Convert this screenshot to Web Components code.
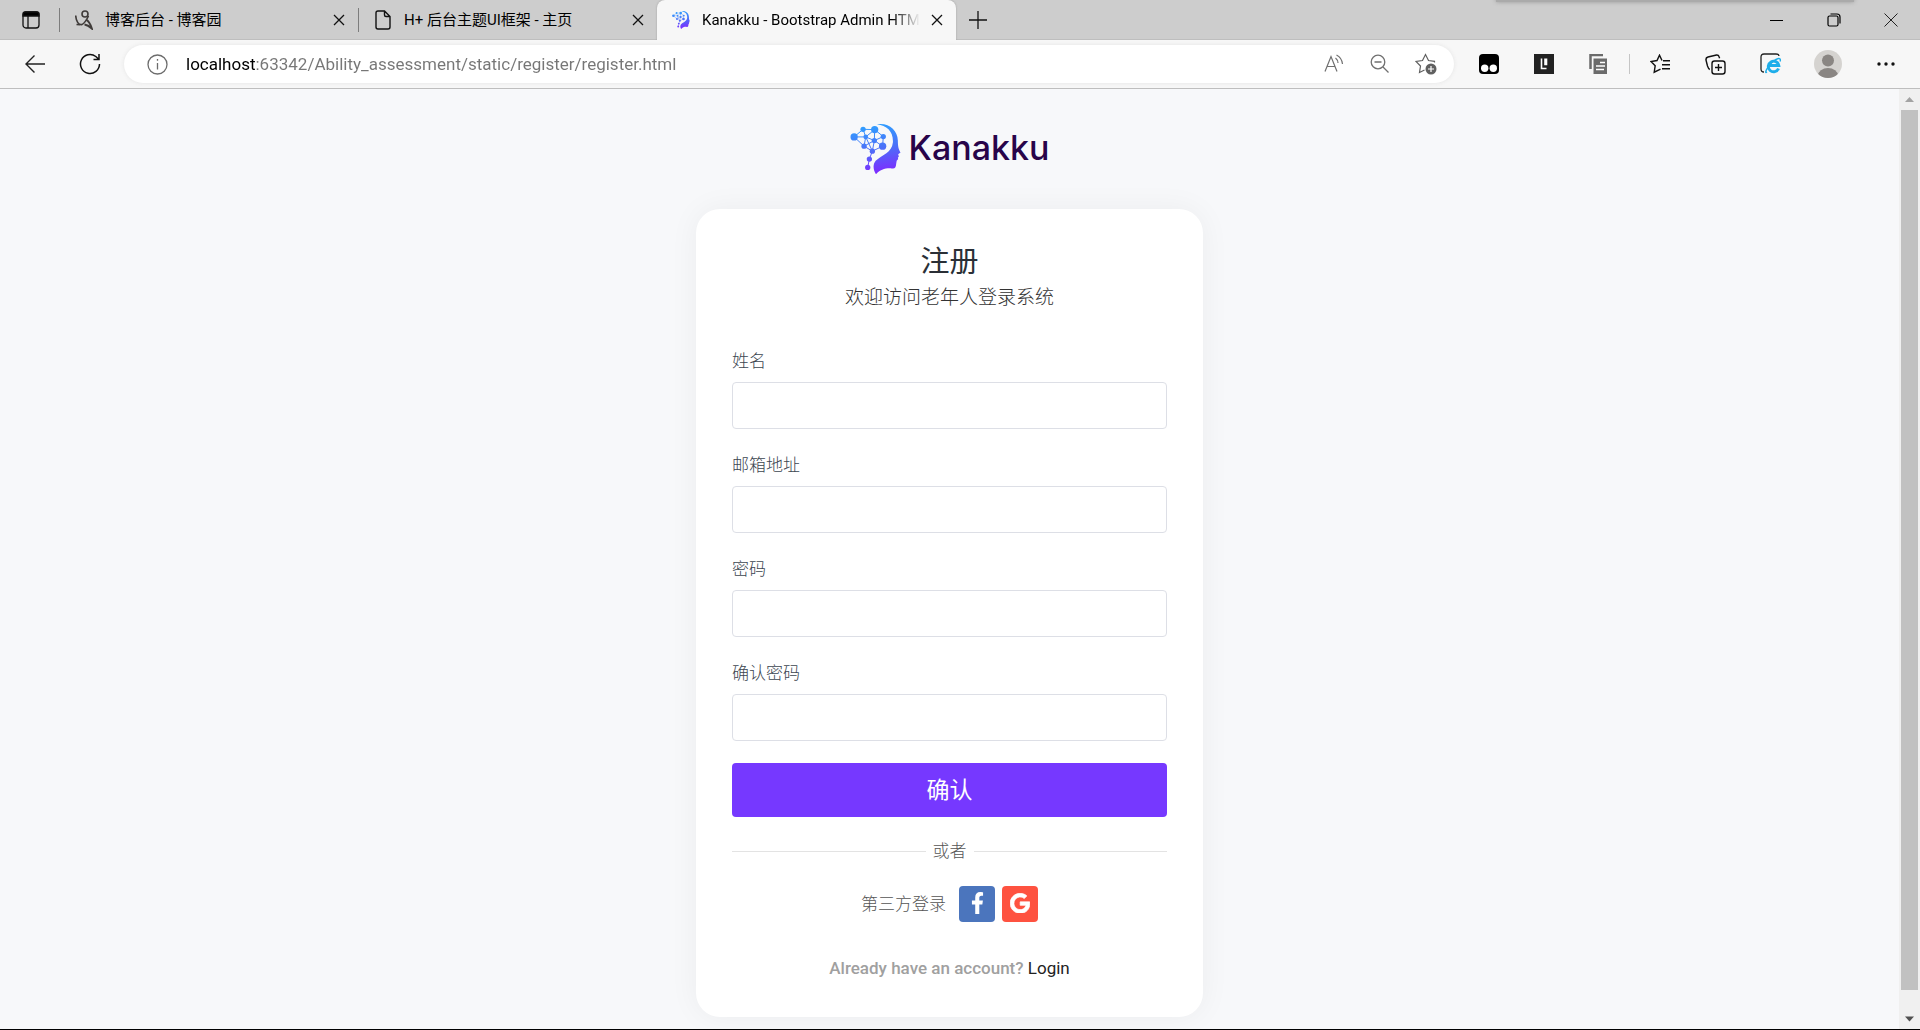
<!DOCTYPE html>
<html lang="zh-CN">
<head>
<meta charset="utf-8">
<title>Kanakku - Bootstrap Admin HTML Template</title>
<style>
html, body { margin: 0; height: 100%; }
body { font-family: "Open Sans", "Noto Sans CJK SC", sans-serif; overflow: hidden; background: #f7f8fa; }
</style>
</head>
<body>
<app-shell></app-shell>
<script>
const base = `<style>
:host, *, *::before, *::after { box-sizing: border-box; }
button { font: inherit; color: inherit; border: 0; background: none; padding: 0; margin: 0; cursor: pointer; }
a { color: inherit; text-decoration: none; }
svg { display: block; }
</style>`;
function define(name, html, setup) {
  const template = document.createElement('template');
  template.innerHTML = base + html;
  customElements.define(name, class extends HTMLElement {
    constructor() {
      super();
      this.attachShadow({ mode: 'open' }).append(template.content.cloneNode(true));
    }
    connectedCallback() { if (setup) setup(this, this.shadowRoot); }
  });
}

// Head made of a network of nodes, used for the logo and the tab icon
define('brain-mark', `<style>
:host { display: block; flex: none; width: 51px; height: 52px; }
svg { width: 100%; height: 100%; }
</style>
<svg viewBox="89 69 153 157" aria-hidden="true">
<defs><linearGradient id="g" gradientUnits="userSpaceOnUse" x1="150" y1="75" x2="170" y2="220"><stop offset="0" stop-color="#2f9fff"/><stop offset=".5" stop-color="#4c6ff8"/><stop offset="1" stop-color="#7d2cff"/></linearGradient></defs>
<g fill="none" stroke="url(#g)" stroke-width="3"><path d="M101 111 128 88 163 89 189 110 187 139 156 154 131 139 101 111 136 111 128 88M163 89 136 111 131 139 162 122 189 110M163 89 162 122 187 139M136 111 162 122 156 154 136 111M156 154 147 178 142 203"/></g>
<g fill="url(#g)"><circle cx="101" cy="111" r="11"/><circle cx="128" cy="88" r="8"/><circle cx="163" cy="89" r="11"/><circle cx="189" cy="110" r="8"/><circle cx="136" cy="111" r="7"/><circle cx="162" cy="122" r="8"/><circle cx="131" cy="139" r="8"/><circle cx="187" cy="139" r="11"/><circle cx="156" cy="154" r="8"/><circle cx="147" cy="178" r="8"/><circle cx="142" cy="203" r="8"/>
<path d="M170 73C205 67 232 90 233 122c0 18 2 26 8 36l-7 5 2 7-3 4 1 4q-6 4-6 14c-1 13-5 16-14 14-20-1-35 4-47 18-8-12-11-29-1-41 20-18 49-24 52-55 2-33-18-51-48-55Z"/></g>
</svg>`);

define('browser-tab', `<style>
:host { display: flex; align-items: center; flex: 0 1 298px; min-width: 0; height: 40px; padding: 0 9px 0 15px; font-family: "Roboto", "Noto Sans CJK SC", sans-serif; font-size: 15px; line-height: 20px; color: #000; }
:host([active]) { flex-basis: 299px; background: #f7f7f7; border-radius: 8px 8px 0 0; box-shadow: 0 0 2px #999; clip-path: inset(0 -3px 0 -3px); }
.icon { display: flex; width: 18px; flex: none; justify-content: center; }
.title { flex: 1; margin: 0 7px 0 12px; overflow: hidden; white-space: nowrap; }
:host([active]) .title { mask-image: linear-gradient(to right, #000 calc(100% - 28px), transparent); }
button { width: 20px; height: 20px; display: grid; place-items: center; }
</style>
<span class="icon"><slot name="icon"></slot></span><span class="title"><slot></slot></span>
<button type="button" aria-label="关闭标签页"><svg width="12" height="12" viewBox="0 0 12 12" stroke="#111" stroke-width="1.3"><path d="M1 1 11 11M11 1 1 11"/></svg></button>`);

define('tab-strip', `<style>
:host { display: flex; align-items: center; height: 40px; background: #cdcdcd; box-shadow: inset 0 -1px #bebebe; position: relative; }
.menu { width: 59px; display: grid; place-items: center; padding-right: 2px; padding-left: 4px; height: 40px; }
.menu, .new, .win button { flex: none; }
i { width: 1px; height: 24px; background: #7d7d7d; flex: none; }
.new { width: 44px; height: 40px; display: grid; place-items: center; }
.win { margin-left: auto; display: flex; flex: none; padding-right: 1px; }
.win button { width: 57px; height: 40px; display: grid; place-items: center; }
.edge { position: absolute; top: -4px; right: 66px; width: 358px; height: 6px; background: #aaa; box-shadow: 0 0 4px #999; }
</style>
<button class="menu" type="button" aria-label="标签页操作"><svg width="18" height="18" viewBox="0 0 18 18" fill="none" stroke="#111" stroke-width="1.3"><rect x="1" y="1" width="16" height="16" rx="3"/><path d="M1 3q0-2 2-2h12q2 0 2 2v2H1Z" fill="#000"/><path d="M6 5v12"/></svg></button>
<i></i>
<browser-tab><svg slot="icon" width="18" height="20" viewBox="0 0 18 20" fill="none" stroke="#403c3a" stroke-width="1.6"><path d="M.7 5.500C1 11 3.500 15.500 7 14.500 9.500 13.500 11.500 10 13.500 6M1.500 14.500 5 14.800"/><circle cx="10" cy="4" r="3"/><path d="M11 9.500Q15 12 16.800 18.500 13 15 9.500 14.500" stroke-width="2"/></svg>博客后台 - 博客园</browser-tab>
<i></i>
<browser-tab><svg slot="icon" width="18" height="20" viewBox="0 0 18 20" fill="none" stroke="#111" stroke-width="1.400"><path d="M10.500 1H4Q2 1 2 3v14q0 2 2 2h10q2 0 2-2V6.500ZM10.500 1v4q0 1.500 1.500 1.500h4"/></svg>H+ 后台主题UI框架 - 主页</browser-tab>
<browser-tab active><brain-mark slot="icon" style="width:18px;height:20px"></brain-mark>Kanakku - Bootstrap Admin HTML Template</browser-tab>
<button class="new" type="button" aria-label="新建标签页"><svg width="18" height="18" viewBox="0 0 18 18" stroke="#111" stroke-width="1.300"><path d="M9 0v18M0 9h18"/></svg></button>
<div class="win">
<button type="button" aria-label="最小化"><svg width="13" height="13" stroke="#000"><path d="M0 6.500h13"/></svg></button>
<button type="button" aria-label="还原"><svg width="14" height="14" fill="none" stroke="#000" stroke-width="1.200"><rect x="1" y="3" width="10" height="10" rx="1.500"/><path d="M3.500 1H10q3 0 3 3v6.500"/></svg></button>
<button type="button" aria-label="关闭"><svg width="14" height="14" stroke="#222"><path d="M.5.5 13.500 13.500M13.500.5.5 13.500"/></svg></button>
</div><div class="edge"></div>`);

define('tool-bar', `<style>
:host { display: flex; align-items: center; height: 49px; background: #f7f7f7; border-bottom: 1px solid #bebebe; }
button { flex: none; width: 55px; height: 40px; display: grid; place-items: center; }
.nav { display: flex; padding: 0 7px; }
.address { flex: 1; display: flex; align-items: center; min-width: 0; height: 38px; border-radius: 19px; background: #fff; box-shadow: 0 0 4px #e4e4e4; padding: 0 5px; }
.address button { width: 46px; height: 38px; }
.address .info { width: 56px; }
input { flex: 1; min-width: 0; border: 0; outline: 0; padding: 0 0 0 1px; height: 30px; font: 17px/24px "Roboto", sans-serif; color: #767676; -webkit-text-fill-color: transparent; background: linear-gradient(to right, #000 70px, #767676 70px); -webkit-background-clip: text; background-clip: text; }
.tools { display: flex; align-items: center; padding: 0 7px; }
i { width: 1px; height: 20px; background: #c5c5c5; margin: 0 3px; }
.me { width: 60px; }
</style>
<div class="nav">
<button type="button" aria-label="返回"><svg width="20" height="18" fill="none" stroke="#222" stroke-width="1.400"><path d="M20 9H1M9.500.5 1 9l8.500 8.500"/></svg></button>
<button type="button" aria-label="刷新"><svg width="22" height="22" viewBox="0 0 22 22" fill="none" stroke="#111" stroke-width="1.500"><path d="M20.500 11A9.500 9.500 0 1 1 16.800 3.500L19.500 6M20 1v5.500h-5.500"/></svg></button></div>
<div class="address">
<button class="info" type="button" aria-label="查看站点信息"><svg width="21" height="21" viewBox="0 0 21 21" fill="none" stroke="#6c6c6c" stroke-width="1.300"><circle cx="10.500" cy="10.500" r="9.500"/><path d="M10.500 9v6.500M10.500 5v1.700"/></svg></button>
<input id="url" aria-label="地址" value="localhost:63342/Ability_assessment/static/register/register.html">
<button type="button" aria-label="大声朗读"><svg width="20" height="20" viewBox="0 0 20 20" fill="none" stroke="#707070" stroke-width="1.200"><path d="M1 17.500 7 2.500l6 15M3.200 12.500h7.700M11.500 4q2.500 2 2.500 5M12.500 1Q18 4 18.500 10"/></svg></button>
<button type="button" aria-label="缩小"><svg width="20" height="20" viewBox="0 0 20 20" fill="none" stroke="#707070" stroke-width="1.300"><circle cx="8" cy="8" r="6.800"/><path d="M4.500 8h7M13 13l5.500 5.500"/></svg></button>
<button type="button" aria-label="添加到收藏夹"><svg width="22" height="22" viewBox="0 0 22 22" fill="none" stroke="#5f5f5f" stroke-width="1.200"><path d="M19.500 9.500V8.300L13.500 7.500 10.500 1.500 7.500 7.500 1 8.400 5.500 13 4.500 19.500 9.500 17"/><circle cx="16" cy="16" r="5.500" fill="#606060" stroke="none"/><path stroke="#fff" d="M13 16h6M16 13v6"/></svg></button></div>
<div class="tools">
<button type="button" aria-label="扩展 脚本管理"><svg width="20" height="20" viewBox="0 0 20 20"><rect width="20" height="20" rx="4"/><circle cx="5.700" cy="14.300" r="3.700" fill="#fff"/><circle cx="14.300" cy="14.300" r="3.700" fill="#fff"/></svg></button>
<button type="button" aria-label="扩展 阅读"><svg width="20" height="20" viewBox="0 0 20 20"><rect width="20" height="20" fill="#222"/><path d="M7.500 4.500v10h5M11 4.500v6h1.500v-6" fill="none" stroke="#fff" stroke-width="1.600"/></svg></button>
<button type="button" aria-label="扩展 复制"><svg width="20" height="20" viewBox="0 0 20 20"><path d="M1.500 15V1h12.500" fill="none" stroke="#6b6b6b" stroke-width="2.500"/><path d="M4.500 4.500H18V20H4.500Z" fill="#6b6b6b"/><path d="M11 8.500h5M7 12h9M7 15.500h8" stroke="#fff" stroke-width="1.500"/></svg></button><i></i>
<button type="button" aria-label="收藏夹"><svg width="21" height="20" viewBox="0 0 21 20" fill="none" stroke="#111" stroke-width="1.400"><path d="M12 6.500 9.500 1.200 7 6.500 1 7.500l4.200 4.200-1 6.500 6.300-3M13 6.800h7M12 10.800h8M12 14.800h8"/></svg></button>
<button type="button" aria-label="集锦"><svg width="21" height="21" viewBox="0 0 21 21" fill="none" stroke="#111" stroke-width="1.400"><rect x="7" y="7" width="13" height="13" rx="2.500"/><path d="M13.500 10v7M10 13.500h7M4.800 15.500C3.500 15 3 13.500 2.500 12L1 6q-.4-2.300 2-3l8.500-2q2-.2 2.500 1.500l.6 1.700"/></svg></button>
<button type="button" aria-label="IE 模式"><svg width="22" height="22" viewBox="0 0 22 22" fill="none"><path d="M4 19Q1 19 1 16V4q0-3 3-3h12q3 0 3 2" stroke="#222" stroke-width="1.300"/><path d="M18.500 15.500A5.300 5.300 0 1 1 18.800 12.500H9.500" stroke="#1eaeea" stroke-width="2.900"/><path d="M7 19c-4 3 2-9 9-12.500 4-2 5-.5 4 2" stroke="#1eaeea" stroke-width="1.400"/></svg></button>
<button class="me" type="button" aria-label="个人资料"><svg width="28" height="28" viewBox="0 0 28 28"><defs><clipPath id="c"><circle cx="14" cy="14" r="14"/></clipPath></defs><g clip-path="url(#c)"><rect width="28" height="28" fill="#d5d3d0"/><circle cx="14" cy="10.500" r="6" fill="#8a8683"/><ellipse cx="14" cy="25.500" rx="10" ry="7.500" fill="#8a8683"/></g></svg></button>
<button type="button" aria-label="设置及其他"><svg width="18" height="4" fill="#111"><circle cx="2" cy="2" r="1.700"/><circle cx="9" cy="2" r="1.700"/><circle cx="16" cy="2" r="1.700"/></svg></button>
</div>`);

define('brand-logo', `<style>
:host { display: block; }
a { display: flex; align-items: center; gap: 8px; font: 500 34px/48px "Inter", sans-serif; color: #28044a; }
span { padding-bottom: 2px; }
</style><a href="#"><brain-mark></brain-mark><span><slot></slot></span></a>`);

define('form-field', `<style>
:host { display: flex; flex-direction: column; gap: 8px; }
label { font-size: 17px; line-height: 26px; color: #3c4650; }
input { width: 100%; height: 47px; border: 1px solid #dddfe6; border-radius: 4px; background: #fff; padding: 6px 15px; font: inherit; outline: 0; }
</style><label for="field"></label><input id="field">`, (host, root) => {
  root.querySelector('label').textContent = host.getAttribute('label');
  root.querySelector('input').type = host.getAttribute('type') || 'text';
});

define('social-button', `<style>
:host { display: block; }
a { display: grid; place-items: center; width: 36px; height: 36px; border-radius: 4px; background: var(--social); padding-bottom: 2px; }
</style><a href="#"><slot></slot></a>`, (host, root) => {
  root.querySelector('a').setAttribute('aria-label', host.getAttribute('name'));
});

define('register-card', `<style>
:host { display: block; width: 507px; max-width: 100%; padding: 34px 36px 37px; background: #fff; border-radius: 24px; box-shadow: 0 0 30px rgba(0,0,0,.05); font-weight: 300; }
h1 { margin: 0 0 6px; text-align: center; font-size: 29px; line-height: 36px; font-weight: 400; color: #2a2f36; }
p { margin: 0; text-align: center; font-size: 19px; line-height: 24px; color: #333; }
form { display: flex; flex-direction: column; gap: 23px; margin-top: 39px; }
form button { height: 54px; margin-top: -1px; padding-bottom: 2px; border-radius: 4px; background: #7638ff; color: #fff; font-size: 23px; line-height: 30px; font-weight: 400; }
.or { display: flex; align-items: center; gap: 7px; margin-top: 21px; font-size: 17px; line-height: 26px; color: #555; }
.or::before, .or::after { content: ""; flex: 1; height: 1px; background: #e3e3e3; }
.social { display: flex; justify-content: center; align-items: center; gap: 7px; margin-top: 22px; font-size: 17px; line-height: 26px; color: #555; }
.social span { margin-right: 6px; }
.foot { margin-top: 34px; font: 500 17px/24px "Roboto", sans-serif; color: #a0a0a0; }
.foot a { color: #222; font-weight: 400; }
</style>
<h1>注册</h1><p>欢迎访问老年人登录系统</p>
<form>
<form-field label="姓名"></form-field>
<form-field label="邮箱地址"></form-field>
<form-field label="密码" type="password"></form-field>
<form-field label="确认密码" type="password"></form-field>
<button type="submit">确认</button>
</form>
<div class="or">或者</div>
<div class="social"><span>第三方登录</span>
<social-button name="Facebook" style="--social:#4b75bd"><svg width="13" height="22" viewBox="0 0 320 512" preserveAspectRatio="none" fill="#fff"><path d="m279 288 14-93h-89v-60c0-25 13-50 53-50h40V7s-37-7-72-7c-73 0-121 44-121 125v70H23v93h81v224h100V288Z"/></svg></social-button>
<social-button name="Google" style="--social:#fe5240"><svg width="20" height="20" viewBox="0 0 488 496" fill="#fff" stroke="#fff" stroke-width="18"><path d="M488 262c0 142-97 242-240 242C111 504 0 393 0 256S111 8 248 8c67 0 123 25 166 65l-67 65C259 53 94 117 94 256c0 86 69 156 154 156 98 0 135-71 141-107H248v-85h236c2 12 4 25 4 42Z"/></svg></social-button></div>
<p class="foot">Already have an account? <a href="#">Login</a></p>`);

define('scroll-rail', `<style>
:host { display: flex; flex-direction: column; flex: none; width: 21px; background: #f0f0f0; }
svg { margin: 0 auto; width: 9px; height: 21px; flex: none; }
.track { flex: 1; padding: 0 2px; }
.thumb { height: 98%; background: #c1c1c1; }
</style><svg viewBox="0 0 9 21"><path d="M0 13 4.500 8 9 13Z" fill="#a3a3a3"/></svg><div class="track"><div class="thumb"></div></div><svg viewBox="0 0 9 21"><path d="M0 8.500 4.500 13.500 9 8.500Z" fill="#505050"/></svg>`);

define('app-shell', `<style>
:host { display: flex; flex-direction: column; height: 100vh; border-bottom: 1px solid #000; }
.view { flex: 1; min-height: 0; display: flex; }
main { flex: 1; min-width: 0; overflow: hidden; display: flex; flex-direction: column; align-items: center; gap: 34px; padding-top: 34px; background: #f7f8fa; }
tab-strip, tool-bar, brand-logo, register-card { flex: none; }
</style>
<tab-strip></tab-strip><tool-bar></tool-bar>
<div class="view"><main><brand-logo>Kanakku</brand-logo><register-card></register-card></main><scroll-rail></scroll-rail></div>`);
</script>
</body>
</html>
